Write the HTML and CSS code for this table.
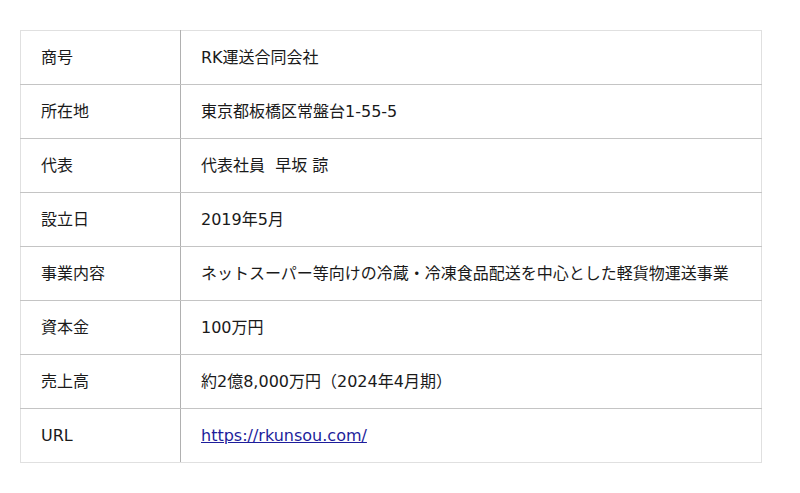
FILE: index.html
```html
<!DOCTYPE html>
<html lang="ja">
<head>
<meta charset="utf-8">
<link rel="stylesheet" href="styles.css">
</head>
<body>
<div class="wrap">
<table class="info">
<tr><th>商号</th><td>RK運送合同会社</td></tr>
<tr><th>所在地</th><td>東京都板橋区常盤台1-55-5</td></tr>
<tr><th>代表</th><td>代表社員&nbsp; 早坂 諒</td></tr>
<tr><th>設立日</th><td>2019年5月</td></tr>
<tr><th>事業内容</th><td>ネットスーパー等向けの冷蔵・冷凍食品配送を中心とした軽貨物運送事業</td></tr>
<tr><th>資本金</th><td>100万円</td></tr>
<tr><th>売上高</th><td>約2億8,000万円（2024年4月期）</td></tr>
<tr><th>URL</th><td><a class="link" href="https://rkunsou.com/">https://rkunsou.com/</a></td></tr>
</table>
</div>
</body>
</html>
```
FILE: styles.css
```css
html, body {
  margin: 0;
  padding: 0;
  background: #ffffff;
}
.wrap {
  padding: 30px 20px;
}
.info {
  width: 742px;
  border-collapse: collapse;
  font-family: "DejaVu Sans", "Noto Sans CJK JP", sans-serif;
  font-size: 16px;
  color: #1a1a1a;
  border: 1px solid #e0e0e0;
}
.info th, .info td {
  text-align: left;
  font-weight: normal;
  line-height: 23px;
  padding: 15px 20px;
  border-bottom: 1px solid #c4c4c4;
  vertical-align: middle;
}
.info tr:first-child th, .info tr:first-child td {
  border-top: 1px solid #e0e0e0;
}
.info tr:last-child th, .info tr:last-child td {
  border-bottom: 1px solid #e0e0e0;
}
.info th {
  width: 119px;
  border-right: 1px solid #b0b0b0;
  border-left: 1px solid #e0e0e0;
}
.info td {
  border-right: 1px solid #e0e0e0;
}
.link {
  color: #1d1d9b;
  text-decoration: underline;
}
```
